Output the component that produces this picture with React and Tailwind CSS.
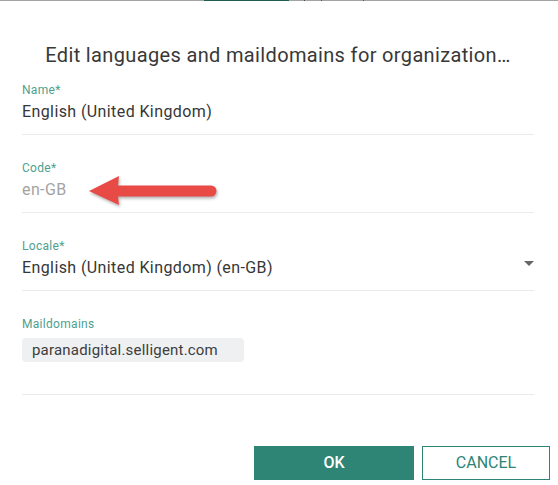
import React from "react";

const Field = ({ label, value, muted, select, first }) => (
  <div className={`${first ? "mt-[13px]" : "mt-[25px]"} border-b border-[#ebebeb] pb-[10px]`}>
    <div className="text-[12px] leading-4 tracking-[0.3px] text-[#4f9f8e]">{label}</div>
    <div className="mt-0.5 flex items-start justify-between">
      <span
        className={`text-[16px] leading-6 tracking-[0.4px] ${muted ? "text-[#a3a3a3]" : "text-[#363636]"}`}
      >
        {value}
      </span>
      {select && (
        <svg width="10" height="5" viewBox="0 0 10 5" className="mt-[5px]">
          <path d="M0 0 L10 0 L5 5 Z" fill="#666666" />
        </svg>
      )}
    </div>
  </div>
);

export default function App() {
  return (
    <div
      className="relative h-[485px] w-[558px] overflow-hidden bg-white"
      style={{ fontFamily: "Roboto, 'Liberation Sans', sans-serif" }}
    >
      {/* edge of the page behind the dialog */}
      <div className="flex h-px bg-[#a3a3a3]">
        <div className="ml-[204px] w-[85px] bg-[#1d5e50]" />
        <div className="ml-[15px] w-px bg-[#444]" />
        <div className="ml-[16px] w-px bg-[#555]" />
        <div className="ml-[41px] w-px bg-[#555]" />
      </div>

      <div className="pl-[22px] pr-[24px]">
        <h2 className="pt-[40px] text-center text-[20px] leading-7 font-normal tracking-[0.35px] text-[#383838]">
          Edit languages and maildomains for organization…
        </h2>

        <Field first label="Name*" value="English (United Kingdom)" />
        <Field label="Code*" value="en-GB" muted />
        <Field label="Locale*" value="English (United Kingdom) (en-GB)" select />

        <div className="mt-[25px] border-b border-[#ebebeb] pb-[32px]">
          <div className="text-[12px] leading-4 tracking-[0.3px] text-[#4f9f8e]">Maildomains</div>
          <div className="mt-[6px] flex h-6 w-[222px] items-center rounded bg-[#eef0f2] pl-[10px] text-[15px] tracking-[0.2px] text-[#3d3d3d]">
            paranadigital.selligent.com
          </div>
        </div>
      </div>

      <div className="mt-[51px] flex justify-end gap-2 pr-2">
        <button className="h-[34px] w-[160px] bg-[#2e8576] text-[16px] font-medium text-white">
          OK
        </button>
        <button className="h-[34px] w-[128px] border border-[#2e8576] bg-white text-[16px] text-[#2e8576]">
          CANCEL
        </button>
      </div>

      {/* annotation arrow */}
      <svg
        width="145"
        height="45"
        viewBox="0 0 145 45"
        className="absolute left-[80px] top-[170px] drop-shadow-[1px_2px_1.5px_rgba(0,0,0,0.3)]"
      >
        <path
          d="M9 21 L39 6 L38 15.5 L131 15.5 A5.5 5.5 0 0 1 131 26.5 L38 26.5 L39 35 Z"
          fill="#e84b46"
        />
      </svg>
    </div>
  );
}
